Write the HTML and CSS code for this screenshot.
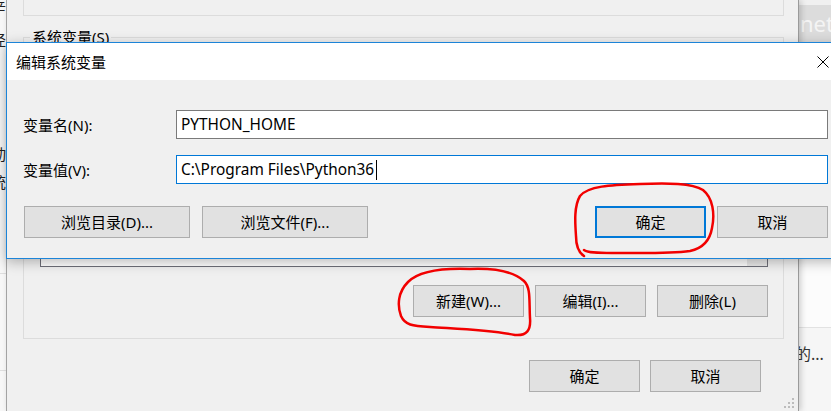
FILE: index.html
```html
<!DOCTYPE html>
<html lang="zh-CN">
<head>
<meta charset="utf-8">
<title>编辑系统变量</title>
<link rel="stylesheet" href="styles.css">
</head>
<body>
<div class="desk">
  <div class="strip-left">
    <span class="frag f1">辛</span>
    <span class="frag f2">径</span>
    <span class="frag f3">动</span>
    <span class="frag f4">统</span>
    <div class="strip-line l1"></div>
    <div class="strip-line l2"></div>
  </div>

  <div class="win-right">
    <div class="wr-top"><span class="net">net</span></div>
    <div class="wr-mid"></div>
    <div class="wr-bot"><span class="wr-text">的...</span></div>
  </div>

  <div class="env-window">
    <div class="group1"></div>
    <div class="group2">
      <span class="legend">系统变量(S)</span>
      <div class="listbox"><div class="scroll"></div></div>
      <div class="btnrow">
        <button class="btn">新建(W)...</button>
        <button class="btn">编辑(I)...</button>
        <button class="btn">删除(L)</button>
      </div>
    </div>
    <div class="footer">
      <button class="btn">确定</button>
      <button class="btn">取消</button>
    </div>
    <svg class="grip" width="12" height="12" viewBox="0 0 12 12">
      <rect x="8" y="0" width="2" height="2" fill="#bcbcbc"/>
      <rect x="4" y="4" width="2" height="2" fill="#bcbcbc"/>
      <rect x="8" y="4" width="2" height="2" fill="#bcbcbc"/>
      <rect x="0" y="8" width="2" height="2" fill="#bcbcbc"/>
      <rect x="4" y="8" width="2" height="2" fill="#bcbcbc"/>
      <rect x="8" y="8" width="2" height="2" fill="#bcbcbc"/>
    </svg>
  </div>

  <div class="dialog">
    <div class="titlebar">
      <span class="title">编辑系统变量</span>
      <svg class="close" width="12" height="12" viewBox="0 0 12 12">
        <path d="M0.5 0.5 L11.5 11.5 M11.5 0.5 L0.5 11.5" stroke="#000" stroke-width="1" fill="none"/>
      </svg>
    </div>
    <div class="dbody">
      <div class="form">
        <label class="lbl">变量名(N):</label>
        <div class="input">PYTHON_HOME</div>
        <label class="lbl">变量值(V):</label>
        <div class="input focus">C:\Program Files\Python36<span class="caret"></span></div>
      </div>
      <div class="actions">
        <div class="grp">
          <button class="btn wide">浏览目录(D)...</button>
          <button class="btn wide">浏览文件(F)...</button>
        </div>
        <div class="grp tight">
          <button class="btn primary">确定</button>
          <button class="btn">取消</button>
        </div>
      </div>
    </div>
  </div>

  <svg class="annot" width="831" height="411" viewBox="0 0 831 411">
    <path d="M584 256 C578 252 576 246 576 236 C575 222 574 206 580 196 C588 186 610 185 640 184 C668 183 692 183 703 190 C713 198 715 214 712 228 C710 240 704 248 690 251 C668 254 640 253 612 253 C598 253 588 253 584 250"
          stroke="#f20000" stroke-width="2.5" fill="none" stroke-linecap="round" stroke-linejoin="round"/>
    <path d="M470 269 C445 268 420 270 408 282 C398 292 397 305 401 316 C405 325 412 326 430 327 C460 329 490 330 515 335 C527 336 531 330 530 318 C529 300 531 288 524 281 C514 272 494 268 470 269"
          stroke="#f20000" stroke-width="2.5" fill="none" stroke-linecap="round" stroke-linejoin="round"/>
  </svg>
</div>
</body>
</html>
```

FILE: styles.css
```css
* { box-sizing: border-box; }

html, body {
  margin: 0;
  padding: 0;
}

body {
  width: 831px;
  height: 411px;
  overflow: hidden;
  background: #ffffff;
  font-family: "Noto Sans", "Noto Sans CJK SC", sans-serif;
  font-size: 15px;
  color: #000;
}

.desk {
  position: relative;
  width: 831px;
  height: 411px;
  overflow: hidden;
}

/* far left window fragment */
.strip-left {
  position: absolute;
  left: 0;
  top: 0;
  width: 7px;
  height: 411px;
  background: #f7f7f7;
  overflow: hidden;
}
.frag {
  position: absolute;
  left: -9px;
  font-size: 15px;
  line-height: 16px;
  color: #222;
}
.f1 { top: -1px; }
.f2 { top: 32px; }
.f3 { top: 146px; }
.f4 { top: 174px; }
.strip-line {
  position: absolute;
  left: 0;
  width: 7px;
  height: 1px;
  background: #dedede;
}
.l1 { top: 273px; }
.l2 { top: 370px; }

/* right window fragment */
.win-right {
  position: absolute;
  left: 797px;
  top: 0;
  width: 34px;
  height: 411px;
  display: flex;
  flex-direction: column;
  background: #fcfcfc;
}
.wr-top {
  height: 42px;
  padding-top: 5px;
  background: #f0f0f0;
}
.net {
  display: block;
  height: 37px;
  background: #dcdcdc;
  color: #f4f4f4;
  font-size: 22px;
  line-height: 36px;
  padding-left: 3px;
  overflow: hidden;
}
.wr-mid {
  height: 286px;
  background: #fcfcfc;
  border-bottom: 1px solid #e2e2e2;
}
.wr-bot {
  flex: 1;
  background: #f6f6f6;
  padding-top: 15px;
}
.wr-text {
  display: block;
  margin-left: -2px;
  font-size: 16px;
  line-height: 22px;
  color: #333;
  white-space: nowrap;
}

/* environment window behind */
.env-window {
  position: absolute;
  left: 6px;
  top: 0;
  width: 793px;
  height: 411px;
  background: #f0f0f0;
  border-left: 1px solid #a3a3a3;
  border-right: 1px solid #9a9a9a;
  box-shadow: 2px 0 6px rgba(0, 0, 0, 0.18);
  padding-left: 16px;
  display: flex;
  flex-direction: column;
}
.group1 {
  width: 761px;
  height: 16px;
  border: 1px solid #dcdcdc;
  border-top: none;
}
.group2 {
  margin-top: 21px;
  width: 761px;
  height: 302px;
  border: 1px solid #dcdcdc;
  display: flex;
  flex-direction: column;
  padding: 0 15px 0 16px;
}
.legend {
  display: block;
  width: fit-content;
  height: 20px;
  line-height: 20px;
  margin: -11px 0 0 -10px;
  padding: 0 2px;
  background: #f0f0f0;
  white-space: nowrap;
}
.listbox {
  margin-top: 5px;
  height: 215px;
  border: 1px solid #6e6f78;
  background: #ffffff;
  display: flex;
  justify-content: flex-end;
}
.scroll {
  width: 20px;
  background: #e9e9e9;
}
.btnrow {
  margin-top: 18px;
  display: flex;
  justify-content: flex-end;
  gap: 11px;
}
.footer {
  margin-top: 21px;
  display: flex;
  justify-content: flex-end;
  gap: 10px;
  padding-right: 37px;
}
.grip {
  position: absolute;
  right: 2px;
  bottom: 1px;
}

.btn {
  width: 111px;
  height: 32px;
  padding: 0;
  background: #e1e1e1;
  border: 1px solid #adadad;
  border-radius: 0;
  font-family: "Noto Sans", "Noto Sans CJK SC", sans-serif;
  font-size: 15px;
  color: #000;
  line-height: 28px;
  text-align: center;
  white-space: nowrap;
}
.btn.wide { width: 166px; }
.btn.primary { border: 2px solid #0078d7; }

/* foreground dialog */
.dialog {
  position: absolute;
  left: 6px;
  top: 42px;
  width: 840px;
  height: 217px;
  border: 1px solid #1c84d8;
  background: #f0f0f0;
  box-shadow: 0 3px 12px rgba(0, 0, 0, 0.28);
  display: flex;
  flex-direction: column;
}
.titlebar {
  height: 37px;
  background: #ffffff;
  display: flex;
  align-items: center;
  justify-content: space-between;
  padding: 0 16px 0 9px;
}
.title {
  font-size: 15px;
  line-height: 20px;
}
.close {
  display: block;
}
.dbody {
  flex: 1;
  padding: 30px 17px 0 16px;
  display: flex;
  flex-direction: column;
}
.form {
  display: grid;
  grid-template-columns: 153px 1fr;
  row-gap: 16px;
  align-items: center;
}
.lbl {
  font-size: 15px;
  line-height: 20px;
  white-space: nowrap;
}
.input {
  height: 29px;
  background: #ffffff;
  border: 1px solid #7a7a7a;
  padding: 0 4px;
  font-size: 15.4px;
  line-height: 26px;
  white-space: nowrap;
  display: flex;
  align-items: center;
}
.input.focus { border-color: #0078d7; }
.caret {
  display: inline-block;
  width: 1px;
  height: 20px;
  background: #000;
  margin-left: 2px;
}
.actions {
  margin-top: 22px;
  display: flex;
  justify-content: space-between;
  padding-left: 1px;
}
.grp {
  display: flex;
  gap: 12px;
}
.grp.tight { gap: 11px; }

/* hand-drawn annotations over everything */
.annot {
  position: absolute;
  left: 0;
  top: 0;
  z-index: 10;
  pointer-events: none;
}
```
